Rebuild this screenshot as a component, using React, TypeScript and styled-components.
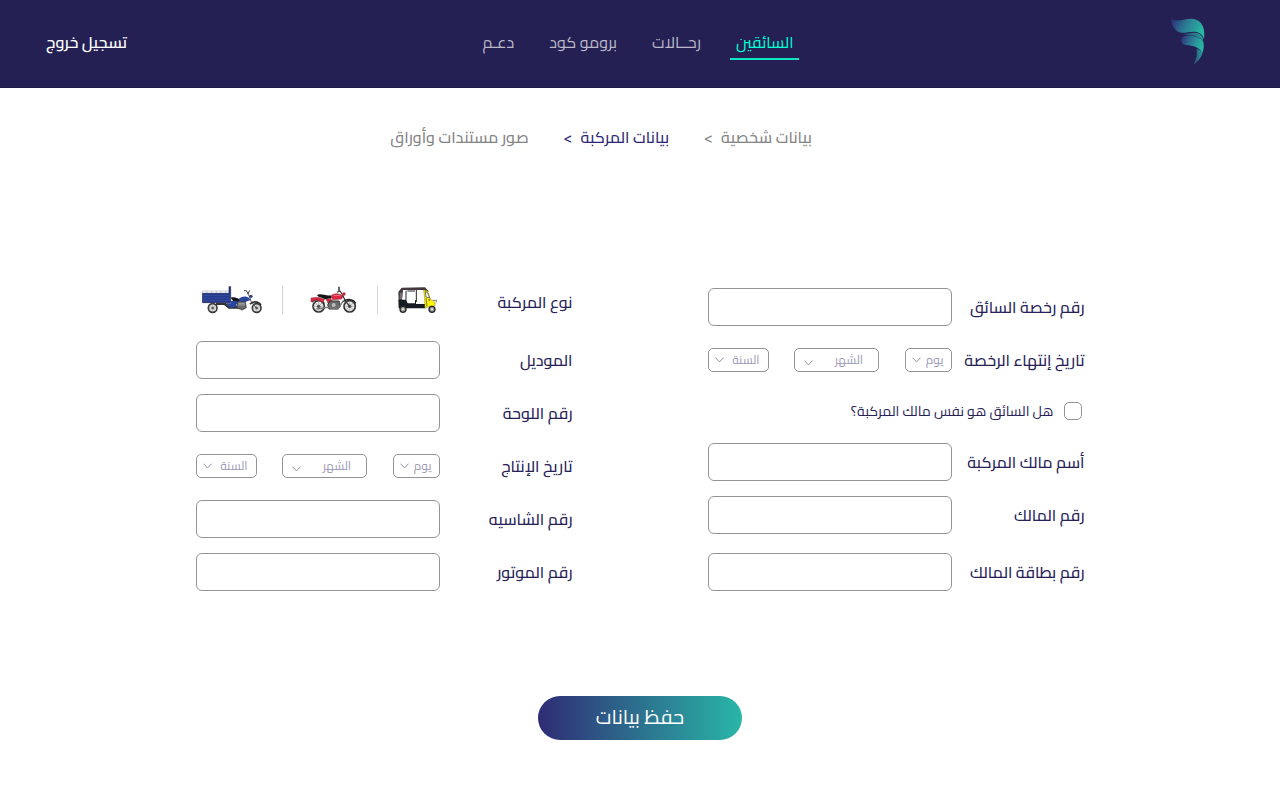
import React, { useId } from "react";
import styled, { createGlobalStyle } from "styled-components";

const navy = "#242054";
const ink = "#262157";
const line = "#949494";

const GlobalStyle = createGlobalStyle`
  * { box-sizing: border-box; }
  body {
    margin: 0;
    background: #ffffff;
    color: ${ink};
    font-family: Cairo, "DejaVu Sans Condensed", "DejaVu Sans", sans-serif;
    font-size: 16px;
  }
  input, select, button { font: inherit; color: inherit; }
`;

const Header = styled.header`
  display: grid;
  grid-template-columns: 1fr auto 1fr;
  align-items: center;
  height: 88px;
  padding: 0 46px;
  background: ${navy};
  border-bottom: 1px solid #1f1a48;
`;

const LogoLink = styled.a`
  display: flex;
  margin-right: 29px;
  padding-bottom: 4px;
  justify-self: start;
`;

const Nav = styled.nav`
  display: flex;
  gap: 23px;
  margin-right: 4px;
  padding-bottom: 4px;
`;

const NavLink = styled.a<{ $active?: boolean }>`
  height: 36px;
  padding: 6px 6px 0;
  line-height: 24px;
  text-decoration: none;
  white-space: nowrap;
  color: ${(p) => (p.$active ? "#00ffd2" : "#bab8c6")};
  border-bottom: 2px solid ${(p) => (p.$active ? "#0fe3c3" : "transparent")};
`;

const Logout = styled.button`
  justify-self: end;
  padding: 0 0 4px;
  border: 0;
  background: none;
  color: #ffffff;
  font-weight: 600;
  line-height: 24px;
  cursor: pointer;
`;

const Steps = styled.ol`
  display: flex;
  justify-content: center;
  gap: 35px;
  margin: 0;
  padding: 37px 78px 0 0;
  list-style: none;
  font-weight: 500;
  line-height: 24px;
`;

const Step = styled.li<{ $current?: boolean }>`
  display: flex;
  gap: 8px;
  white-space: nowrap;
  color: ${(p) => (p.$current ? "#2c2875" : "#848484")};
  a { color: inherit; text-decoration: none; }
`;

const Form = styled.form`
  padding: 132px 24px 60px;
`;

const Columns = styled.div`
  display: flex;
  flex-wrap: wrap;
  justify-content: center;
  align-items: flex-end;
  gap: 40px 135px;
`;

const Column = styled.div<{ $rows: string }>`
  display: grid;
  grid-template-rows: ${(p) => p.$rows};
  row-gap: 15px;
  align-items: end;
  width: 377px;
`;

const Row = styled.div<{ $fill?: boolean }>`
  display: flex;
  align-items: center;
  justify-content: space-between;
  height: ${(p) => (p.$fill ? "100%" : "38px")};
  padding-bottom: ${(p) => (p.$fill ? "4px" : "0")};
  font-weight: 500;
`;

const Label = styled.label`
  line-height: 24px;
  white-space: nowrap;
`;

const TextInput = styled.input`
  width: 244px;
  height: 38px;
  padding: 0 12px;
  border: 1px solid ${line};
  border-radius: 6px;
  background: #ffffff;
`;

const DateGroup = styled.div`
  display: flex;
  justify-content: space-between;
  width: 244px;
`;

const SelectBox = styled.div<{ $width: number }>`
  position: relative;
  width: ${(p) => p.$width}px;
  height: 24px;
`;

const Select = styled.select<{ $inset: number }>`
  appearance: none;
  display: block;
  width: 100%;
  height: 24px;
  padding: 0 ${(p) => p.$inset}px 0 0;
  border: 1px solid ${line};
  border-radius: 5px;
  background: #ffffff;
  color: #9c98b6;
  font-size: 12px;
  font-weight: 400;
  line-height: 18px;
`;

const Chevron = styled.svg<{ $low?: boolean }>`
  position: absolute;
  left: ${(p) => (p.$low ? 10 : 7)}px;
  top: ${(p) => (p.$low ? 12 : 9)}px;
  pointer-events: none;
`;

const CheckRow = styled.div`
  display: flex;
  align-items: center;
  gap: 10px;
  height: 100%;
  padding-right: 3px;
  font-size: 14px;
`;

const Checkbox = styled.input`
  appearance: none;
  width: 18px;
  height: 18px;
  margin: 0;
  border: 1px solid ${line};
  border-radius: 5px;
  &:checked { background: ${navy}; }
`;

const Vehicles = styled.div`
  display: flex;
  align-items: center;
  gap: 20px;
  width: 244px;
  padding: 0 2px 4px 0;
`;

const Vehicle = styled.label<{ $space?: boolean }>`
  position: relative;
  display: flex;
  padding-left: ${(p) => (p.$space ? 7 : 0)}px;
  cursor: pointer;
`;

const HiddenRadio = styled.input`
  position: absolute;
  inset: 0;
  margin: 0;
  opacity: 0;
`;

const Divider = styled.span`
  width: 1px;
  height: 28px;
  background: #d2d2d2;
`;

const Save = styled.button`
  display: block;
  width: 204px;
  height: 44px;
  margin: 105px auto 0;
  padding: 0 0 4px;
  border: 0;
  border-radius: 22px;
  background: linear-gradient(90deg, #2f2c75, #29b6a8);
  color: #ffffff;
  font-size: 20px;
  cursor: pointer;
`;

function Logo() {
  return (
    <svg width="34" height="48" viewBox="61 54 102 144" aria-hidden="true">
      <defs>
        <linearGradient id="wing" x1="0" x2="1" y1="0" y2="0.3">
          <stop offset="0" stopColor="#2d2c78" />
          <stop offset="0.5" stopColor="#2b7c93" />
          <stop offset="1" stopColor="#29b5a2" />
        </linearGradient>
        <linearGradient id="fold" x1="0" x2="1" y1="0" y2="0">
          <stop offset="0" stopColor="#27456e" />
          <stop offset="1" stopColor="#2b9c9a" />
        </linearGradient>
      </defs>
      <path fill="url(#wing)" d="M62 55C75 68 95 57 122 56C150 57 165 78 160 117C156 106 150 97 132 95C110 94 98 103 82 95C68 86 62 72 62 55Z" />
      <path fill="url(#fold)" d="M95 103C115 101 134 94 148 103C154 108 158 113 157 123C145 109 125 105 95 103Z" />
      <path fill="url(#wing)" d="M105 107C125 105 150 112 158 125C161 140 158 150 155 160C150 147 135 139 115 136C98 136 92 130 92 120C92 112 97 108 105 107Z" />
      <path fill="url(#fold)" d="M137 146C148 149 153 154 155 160C151 174 142 185 128 195C136 179 141 165 137 146Z" />
    </svg>
  );
}

function Wheel({ cx, cy, r }: { cx: number; cy: number; r: number }) {
  return (
    <g fill="none">
      <circle cx={cx} cy={cy} r={r} fill="#e6e6e6" stroke="#343434" strokeWidth="5" />
      <path stroke="#8d8d8d" strokeWidth="1.5" d={`M${cx - r} ${cy}H${cx + r}M${cx} ${cy - r}V${cy + r}M${cx - r * 0.7} ${cy - r * 0.7}L${cx + r * 0.7} ${cy + r * 0.7}M${cx + r * 0.7} ${cy - r * 0.7}L${cx - r * 0.7} ${cy + r * 0.7}`} />
      <circle cx={cx} cy={cy} r={r * 0.3} fill="#555" />
    </g>
  );
}

function CargoTrike() {
  return (
    <svg width="60" height="28" viewBox="36 31 180 84" aria-hidden="true">
      <Wheel cx={68} cy={97} r={13} />
      <Wheel cx={200} cy={97} r={13} />
      <path fill="none" stroke="#b4b6c4" strokeWidth="2" d="M37 54V46H118V54M51 46V54M65 46V54M79 46V54M93 46V54M107 46V54" />
      <path fill="#24398c" stroke="#1b2557" strokeWidth="2" d="M37 53H117V33H122V81H37Z" />
      <path stroke="#4560b8" strokeWidth="1.5" d="M39 60H119M39 67H119M39 74H119" />
      <path fill="#333" d="M78 82H108L120 92H150V99H116L102 88H78Z" />
      <path fill="#151515" d="M122 66C130 62 144 67 149 71L146 77H130Z" />
      <path fill="#2b469f" d="M147 69C156 61 168 60 176 66L181 73L166 79L147 78ZM110 82L137 84L142 93L118 96Z" />
      <path fill="#2b469f" d="M122 76H150V86H122Z" />
      <path fill="#686868" stroke="#303030" strokeWidth="2" d="M142 78H166L169 96L157 103L141 97Z" />
      <path stroke="#c9c9c9" strokeWidth="2" d="M145 83H164M145 88H165" />
      <path fill="none" stroke="#444" strokeWidth="3" d="M162 45H169L176 57L183 77L199 97M173 56L179 44" />
      <circle cx="183" cy="62" r="5" fill="#35457c" />
      <path fill="none" stroke="#333" strokeWidth="5" d="M180 86C188 76 204 76 213 88" />
    </svg>
  );
}

function Motorcycle() {
  return (
    <svg width="47" height="28" viewBox="106 30 141 84" aria-hidden="true">
      <Wheel cx={132} cy={91} r={17} />
      <Wheel cx={225} cy={91} r={17} />
      <path fill="none" stroke="#222" strokeWidth="4" d="M112 78C121 67 140 68 149 82M205 77C218 66 237 70 243 82" />
      <path fill="#e12640" stroke="#87303b" strokeWidth="1.5" d="M109 66L129 64L150 70L144 79L126 71L109 78ZM169 60C177 50 197 51 205 61L201 69L174 71ZM154 69L169 68L174 80L160 82Z" />
      <path stroke="#f7a1aa" strokeWidth="2" d="M177 59L196 58" />
      <path fill="#151515" d="M127 57C139 51 153 61 168 58L171 66L151 70C144 64 132 66 127 57Z" />
      <path fill="#6b6b6b" stroke="#333" strokeWidth="3" d="M166 75H193L197 91L187 99H163L159 86Z" />
      <circle cx="177" cy="87" r="6" fill="#bcbcbc" />
      <path fill="none" stroke="#777" strokeWidth="4" d="M126 99L156 94L190 99L206 74" />
      <path fill="none" stroke="#333" strokeWidth="3.5" d="M187 49L196 45L204 57L211 73L225 91M193 46V34" />
      <path fill="#666" d="M190 32H196V42H190Z" />
      <circle cx="208" cy="54" r="5" fill="#bf2d3e" />
    </svg>
  );
}

function TukTuk() {
  return (
    <svg width="40" height="28" viewBox="369 34 120 84" aria-hidden="true">
      <path fill="#43383d" d="M370 52L380 39L450 38L461 50L454 54L446 46H384L381 78H371Z" />
      <path fill="#776b70" d="M375 54H381V74H374Z" />
      <path fill="#171b24" d="M370 75H393L398 86H420V77H423V88H450V101H371Z" />
      <path stroke="#252529" strokeWidth="3" d="M393 48V78M424 46V82M397 49H420" />
      <path fill="#fff" d="M427 49H446L450 88H427Z" />
      <path fill="#fff500" stroke="#817a19" strokeWidth="1.5" d="M446 46L458 49L466 73L481 84L479 94L463 95L450 101L449 70Z" />
      <path fill="#fff" stroke="#343434" strokeWidth="2" d="M451 51L457 53L464 70L453 67Z" />
      <path fill="none" stroke="#463c28" strokeWidth="2" d="M453 70L456 95M474 77H484V83" />
      <circle cx="463" cy="76" r="3" fill="#a66b27" />
      <circle cx="384" cy="104" r="9" fill="#999" stroke="#292929" strokeWidth="4" />
      <circle cx="471" cy="104" r="9" fill="#999" stroke="#292929" strokeWidth="4" />
      <circle cx="384" cy="104" r="3" fill="#eee" />
      <circle cx="471" cy="104" r="3" fill="#eee" />
    </svg>
  );
}

function Field({ label }: { label: string }) {
  const id = useId();
  return (
    <Row>
      <Label htmlFor={id}>{label}</Label>
      <TextInput id={id} type="text" />
    </Row>
  );
}

const dateParts = [
  { text: "يوم", width: 47, inset: 7, low: false },
  { text: "الشهر", width: 85, inset: 15, low: true },
  { text: "السنة", width: 61, inset: 8, low: false },
];

function DateField({ label }: { label: string }) {
  const id = useId();
  return (
    <Row>
      <Label htmlFor={id}>{label}</Label>
      <DateGroup>
        {dateParts.map((part, i) => (
          <SelectBox key={part.text} $width={part.width}>
            <Select id={i === 0 ? id : undefined} aria-label={part.text} $inset={part.inset}>
              <option>{part.text}</option>
            </Select>
            <Chevron $low={part.low} width="9" height="6" viewBox="0 0 9 6" fill="none" stroke="#8f8f9b">
              <path d="M0.5 0.7L4.5 4.9L8.5 0.7" />
            </Chevron>
          </SelectBox>
        ))}
      </DateGroup>
    </Row>
  );
}

export default function App() {
  return (
    <div dir="rtl" lang="ar">
      <GlobalStyle />
      <Header>
        <LogoLink href="#"><Logo /></LogoLink>
        <Nav>
          <NavLink href="#" $active>السائقين</NavLink>
          <NavLink href="#">رحــالات</NavLink>
          <NavLink href="#">برومو كود</NavLink>
          <NavLink href="#">دعـم</NavLink>
        </Nav>
        <Logout type="button">تسجيل خروج</Logout>
      </Header>
      <main>
        <Steps>
          <Step><a href="#">بيانات شخصية</a><span>&gt;</span></Step>
          <Step $current><a href="#">بيانات المركبة</a><span>&gt;</span></Step>
          <Step><a href="#">صور مستندات وأوراق</a></Step>
        </Steps>
        <Form onSubmit={(e) => e.preventDefault()}>
          <Columns>
            <Column $rows="38px 38px 34px 38px 38px 42px">
              <Field label="رقم رخصة السائق" />
              <DateField label="تاريخ إنتهاء الرخصة" />
              <CheckRow>
                <Checkbox id="same-owner" type="checkbox" />
                <Label htmlFor="same-owner">هل السائق هو نفس مالك المركبة؟</Label>
              </CheckRow>
              <Field label="أسم مالك المركبة" />
              <Field label="رقم المالك" />
              <Field label="رقم بطاقة المالك" />
            </Column>
            <Column $rows="45px repeat(5, 38px)">
              <Row $fill role="radiogroup" aria-labelledby="vehicle-type">
                <Label as="span" id="vehicle-type">نوع المركبة</Label>
                <Vehicles>
                  <Vehicle><HiddenRadio type="radio" name="vehicle" aria-label="توك توك" /><TukTuk /></Vehicle>
                  <Divider />
                  <Vehicle $space><HiddenRadio type="radio" name="vehicle" aria-label="موتوسيكل" /><Motorcycle /></Vehicle>
                  <Divider />
                  <Vehicle><HiddenRadio type="radio" name="vehicle" aria-label="تروسيكل" /><CargoTrike /></Vehicle>
                </Vehicles>
              </Row>
              <Field label="الموديل" />
              <Field label="رقم اللوحة" />
              <DateField label="تاريخ الإنتاج" />
              <Field label="رقم الشاسيه" />
              <Field label="رقم الموتور" />
            </Column>
          </Columns>
          <Save type="submit">حفظ بيانات</Save>
        </Form>
      </main>
    </div>
  );
}
